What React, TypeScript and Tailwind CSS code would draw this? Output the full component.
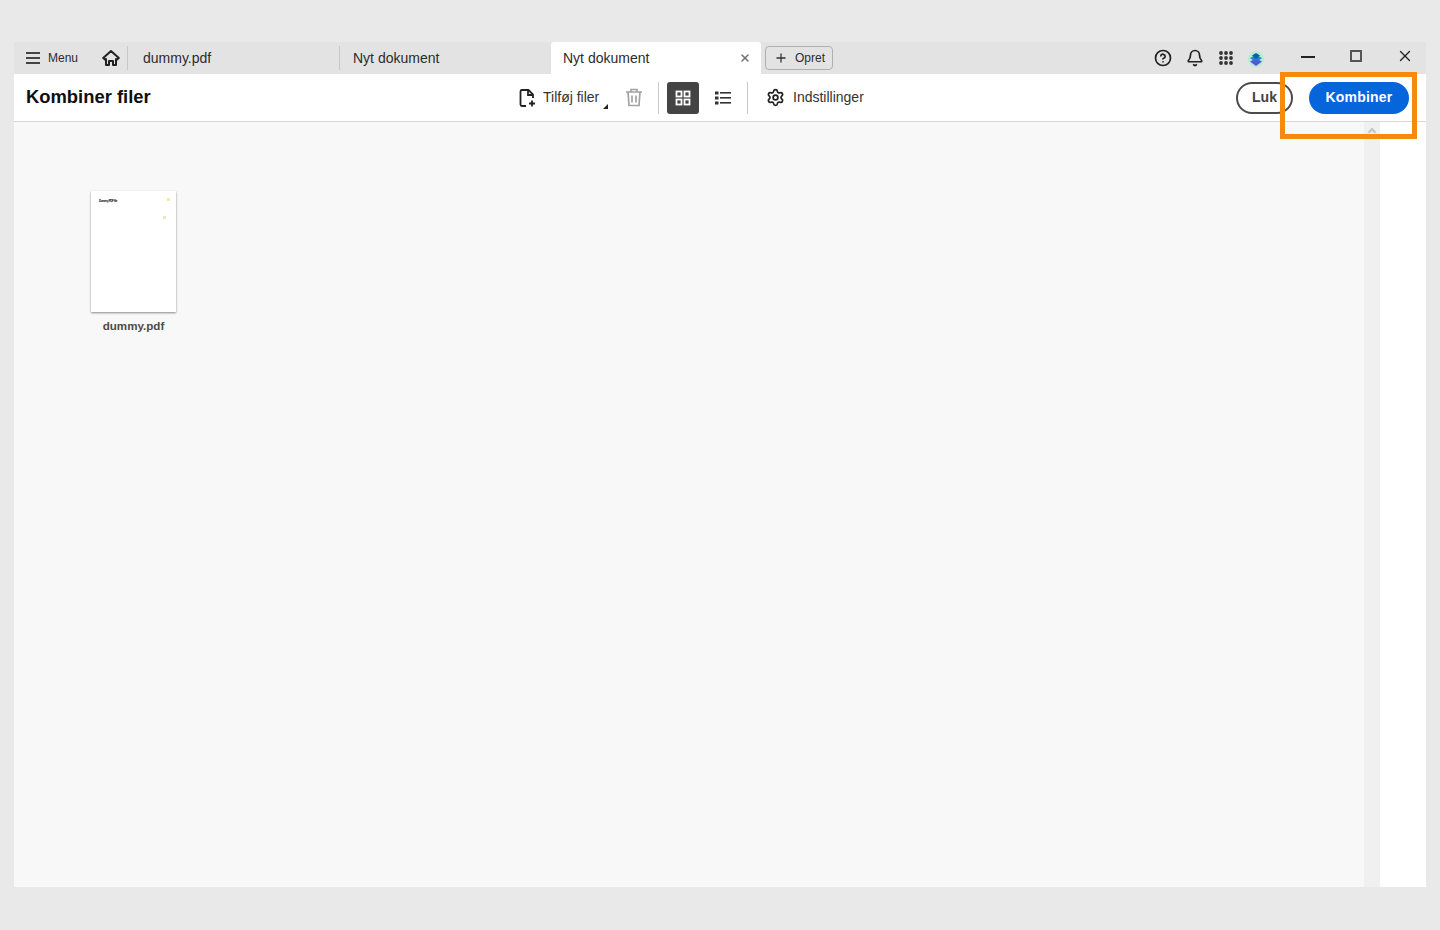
import { Bell, CircleHelp, Plus, Settings, X } from "lucide-react"

function Divider({ className }: { className: string }) {
  return <div className={`w-px bg-[#c8c8c8] ${className}`} />
}

function TabBar() {
  return (
    <div className="flex h-8 items-stretch bg-[#e3e3e3] text-[14px] text-[#2c2c2c]">
      <div className="flex w-[80px] items-center pl-[12px]">
        <svg width="14" height="14" viewBox="0 0 14 14" fill="#444">
          <rect x="0" y="1" width="14" height="2" />
          <rect x="0" y="6" width="14" height="2" />
          <rect x="0" y="11" width="14" height="2" />
        </svg>
        <span className="ml-2 text-[12px]">Menu</span>
      </div>
      <div className="flex w-[33px] items-center pl-[8px]">
        <svg width="18" height="18" viewBox="0 0 18 18" fill="none" stroke="#222" strokeWidth="2" strokeLinejoin="round">
          <path d="M1.2 9 9 2l7.8 7-2 1.6-.8-.6V16h-3v-4H7v4H4v-6l-.8.6Z" />
        </svg>
      </div>
      <div className="flex w-[212px] items-center">
        <Divider className="h-[24px]" />
        <span className="ml-[15px]">dummy.pdf</span>
      </div>
      <div className="flex w-[212px] items-center">
        <Divider className="h-[24px]" />
        <span className="ml-[13px]">Nyt dokument</span>
      </div>
      <div className="flex w-[210px] items-center justify-between rounded-t-[3px] bg-white pl-3 pr-[10px]">
        <span>Nyt dokument</span>
        <X size={12} strokeWidth={3} className="text-[#6e6e6e]" />
      </div>
      <div className="ml-1 flex items-center">
        <div className="flex h-6 w-[68px] items-center rounded-[4px] border border-[#b0b0b0] pl-[8px] text-[12px]">
          <Plus size={14} strokeWidth={2.2} className="text-[#333]" />
          <span className="ml-[7px]">Opret</span>
        </div>
      </div>
      <div className="ml-auto flex items-center">
        <CircleHelp size={18} strokeWidth={2.3} className="text-[#222]" />
        <Bell size={18} strokeWidth={2.3} className="ml-[14px] text-[#222]" />
        <svg width="14" height="14" viewBox="0 0 14 14" fill="#333" className="ml-[15px]">
          <circle cx="2" cy="2" r="1.9" />
          <circle cx="7" cy="2" r="1.9" />
          <circle cx="12" cy="2" r="1.9" />
          <circle cx="2" cy="7" r="1.9" />
          <circle cx="7" cy="7" r="1.9" />
          <circle cx="12" cy="7" r="1.9" />
          <circle cx="2" cy="12" r="1.9" />
          <circle cx="7" cy="12" r="1.9" />
          <circle cx="12" cy="12" r="1.9" />
        </svg>
        <svg width="18" height="18" viewBox="0 0 18 18" className="ml-[14px] mt-[2px]">
          <circle cx="9" cy="9" r="8" fill="#b6ecd2" />
          <path d="M3 11.5 9 8.5 15 11.5 9 16Z" fill="#5b54d8" />
          <path d="M3 8 9 5 15 8 9 12Z" fill="#1f7fd0" />
          <path d="M5 5.5 9 3 13 5.5 9 9Z" fill="#0f5fa8" />
        </svg>
        <div className="ml-[36px] h-[2px] w-[14px] -translate-y-[1px] bg-[#222]" />
        <div className="ml-[35px] h-[12px] w-[12px] -translate-y-[2px] border-2 border-[#555]" />
        <X size={18} strokeWidth={1.8} className="ml-[34px] mr-[12px] -translate-y-[2px] text-[#222]" />
      </div>
    </div>
  )
}

function Toolbar() {
  return (
    <div className="flex h-12 items-center border-b border-[#d8d8d8] bg-white">
      <h1 className="w-[491px] pl-3 text-[18.4px] font-bold leading-none text-[#0f0f0f]">Kombiner filer</h1>
      <div className="relative flex w-[120px] items-center text-[14px] text-[#333]">
        <svg width="20" height="20" viewBox="0 0 20 20" fill="none" stroke="#222" strokeWidth="1.8" className="ml-[12px]">
          <path d="M9 18H5a1.5 1.5 0 0 1-1.5-1.5v-13A1.5 1.5 0 0 1 5 2h6.5L16 6.5V10" />
          <path d="M11 2v5h5" />
          <path d="M15 12.5v6M12 15.5h6" />
        </svg>
        <span className="ml-[6px]">Tilføj filer</span>
        <div className="absolute bottom-[-1px] right-[17px] h-0 w-0 border-b-[5px] border-l-[5px] border-b-[#222] border-l-transparent" />
      </div>
      <svg width="18" height="19" viewBox="0 0 18 19" fill="none" stroke="#a3a3a3" strokeWidth="1.7">
        <path d="M1 4h16M6 4V1.5h6V4" />
        <path d="M3 4l1 13.5h10L15 4" />
        <path d="M7 7.5v7M11 7.5v7" />
      </svg>
      <Divider className="ml-[15px] h-[32px]" />
      <div className="ml-2 flex h-8 w-8 items-center justify-center rounded-[3px] bg-[#444]">
        <svg width="16" height="16" viewBox="0 0 16 16" fill="none" stroke="#fff" strokeWidth="1.8">
          <rect x="1.5" y="1.5" width="5" height="5" />
          <rect x="9.5" y="1.5" width="5" height="5" />
          <rect x="1.5" y="9.5" width="5" height="5" />
          <rect x="9.5" y="9.5" width="5" height="5" />
        </svg>
      </div>
      <svg width="16" height="14" viewBox="0 0 16 14" className="ml-[16px]" fill="#333">
        <rect x="0" y="0.5" width="3.5" height="3" />
        <rect x="0" y="5.5" width="3.5" height="3" />
        <rect x="0" y="10.5" width="3.5" height="3" />
        <rect x="5" y="1" width="11" height="1.6" />
        <rect x="5" y="6" width="11" height="1.6" />
        <rect x="5" y="11" width="11" height="1.6" />
      </svg>
      <Divider className="ml-[16px] h-[32px]" />
      <Settings size={19} strokeWidth={2.2} className="ml-[18px] text-[#222]" />
      <span className="ml-2 text-[14px] text-[#333]">Indstillinger</span>
      <div className="ml-auto flex items-center pr-[17px]">
        <div className="flex h-8 w-[57px] items-center justify-center rounded-full border-2 border-[#4b4b4b] text-[14px] font-bold text-[#444]">
          Luk
        </div>
        <div className="ml-4 flex h-8 w-[100px] items-center justify-center rounded-full bg-[#0765dc] text-[14px] font-bold tracking-[0.2px] text-white">
          Kombiner
        </div>
      </div>
    </div>
  )
}

function Thumbnail() {
  return (
    <div className="flex w-[85px] flex-col items-center">
      <div className="relative h-[121px] w-[85px] bg-white shadow-[0_1px_2px_rgba(0,0,0,0.45)]">
        <span className="absolute left-[8px] top-[9px] whitespace-nowrap text-[3px] font-bold leading-none tracking-[-0.36px] text-black">
          Dummy PDF file
        </span>
        <div className="absolute left-[76px] top-[7px] h-[3px] w-[3px] bg-[#f3eba0]" />
        <div className="absolute left-[72px] top-[25px] h-[3px] w-[3px] bg-[#f3eba0]" />
      </div>
      <span className="mt-[7px] text-[11.6px] font-bold leading-[14px] text-[#4b4b4b]">dummy.pdf</span>
    </div>
  )
}

export default function App() {
  return (
    <div className="relative h-[930px] bg-[#e9e9e9] px-[14px] pb-[43px] pt-[42px] font-['Liberation_Sans',Arial,sans-serif]">
      <div className="flex h-full flex-col">
        <TabBar />
        <Toolbar />
        <div className="flex flex-1">
          <div className="flex-1 bg-[#f8f8f8] pl-[77px] pt-[69px]">
            <Thumbnail />
          </div>
          <div className="flex w-4 justify-center bg-[#f0f0f0] pt-[5px]">
            <div className="h-[6px] w-[6px] translate-y-[2px] rotate-45 border-l-2 border-t-2 border-[#c4c4c4]" />
          </div>
          <div className="w-[46px] bg-white" />
        </div>
      </div>
      <div className="absolute left-[1280px] top-[72px] h-[67px] w-[137px] border-[5px] border-[#f68a0e]" />
    </div>
  )
}
